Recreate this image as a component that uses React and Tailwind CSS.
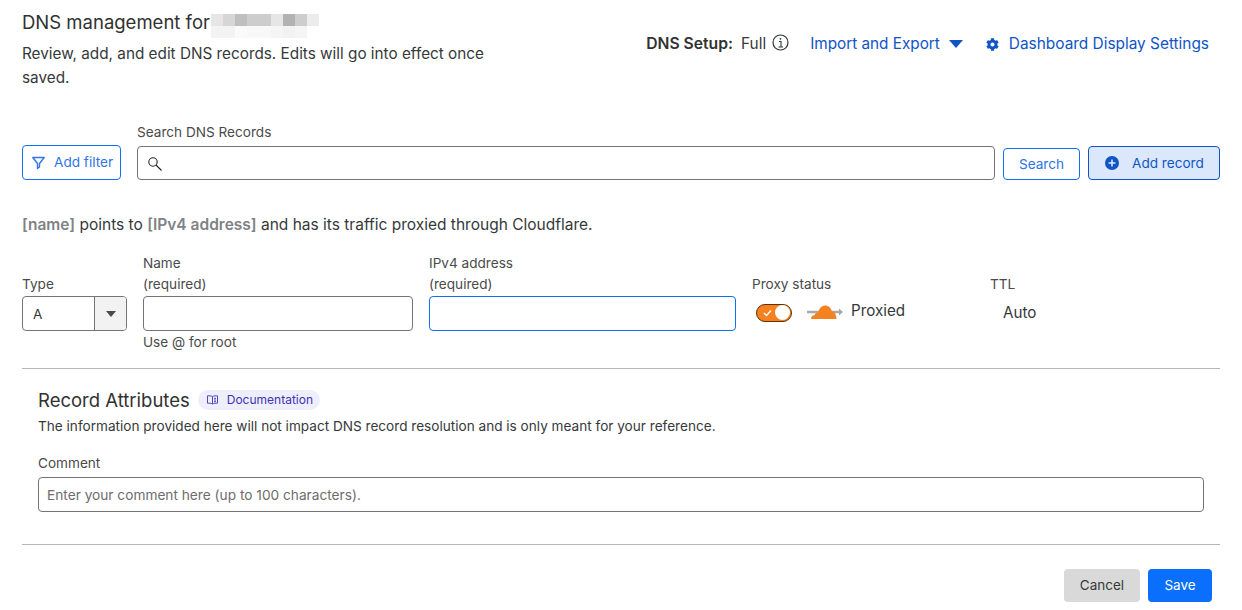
import { FaCog } from "react-icons/fa";

const blurTop = ["#e6e6e6", "#d6d6d6", "#bfbfbf", "#cdcdcd", "#cdcdcd", "#e6e6e6", "#b2b2b2", "#cdcdcd", "#ececec"];
const blurBottom = ["#f3f3f3", "#f3f3f3", "#fafafa", "#f8f8f8", "#f8f8f8", "#f5f5f5", "#f2f2f2", "#f5f5f5", "#ffffff"];

function RedactedName() {
  return (
    <div className="ml-[1px] mt-[8px] grid h-[24px] w-[108px] grid-cols-9">
      {blurTop.concat(blurBottom).map((color, index) => (
        <span key={index} style={{ backgroundColor: color }} />
      ))}
    </div>
  );
}

function CloudIcon() {
  return (
    <svg width="36" height="20" viewBox="0 0 36 20">
      <path d="M0 9h33" stroke="#a8a8a8" strokeWidth="2.500" />
      <path d="M32 5.500l4 3.500-4 3.500z" fill="#a8a8a8" />
      <path
        d="M4 16c0-2.200 1.500-3.800 3.500-3.800.3-1.600 1.800-2.700 3.500-2.300C12 5.500 14.800 2.500 18 2.500c3.400 0 6 2.400 6.800 5.800 2.600.2 4.700 3.500 4.700 7.700z"
        fill="#f6821f"
      />
    </svg>
  );
}

function InfoIcon() {
  return (
    <svg className="mb-[3px] ml-[6px]" width="17" height="17" viewBox="0 0 17 17" fill="none" stroke="#36393a">
      <circle cx="8.500" cy="8.500" r="7.500" strokeWidth="1.200" />
      <path d="M7 7.500h2V13M6.500 13h4.500" strokeWidth="1.100" />
      <circle cx="8.500" cy="4.800" r="0.900" fill="#36393a" stroke="none" />
    </svg>
  );
}

function FunnelIcon() {
  return (
    <svg width="13" height="14" viewBox="0 0 13 14" fill="none" stroke="#2f74e8" strokeWidth="1.400">
      <path d="M0.800 1.500h11.400L7.500 7.500v3.500L5.500 12.500V7.500z" strokeLinejoin="round" />
    </svg>
  );
}

function SearchGlass() {
  return (
    <svg className="mt-[2px]" width="14" height="14" viewBox="0 0 14 14" fill="none" stroke="#222" strokeWidth="1.100">
      <circle cx="5" cy="5" r="4.200" />
      <path d="M8 8l5.500 5.500" />
    </svg>
  );
}

function PlusDot() {
  return (
    <svg width="14" height="14" viewBox="0 0 14 14">
      <circle cx="7" cy="7" r="7" fill="#0f54c6" />
      <path d="M7 3.500v7M3.500 7h7" stroke="#dbe8fb" strokeWidth="1.600" />
    </svg>
  );
}

function DocsIcon() {
  return (
    <svg width="11" height="10" viewBox="0 0 11 10" fill="none" stroke="#3d35b5" strokeWidth="0.900">
      <path d="M5.500 1.500C4.500.8 2 .8.500.8v7.400c1.500 0 4 0 5 .8 1-.8 3.500-.8 5-.8V.8c-1.500 0-4 0-5 .7zM5.500 1.500V9" />
      <path d="M7 3.300h2M7 5h2M7 6.700h2" />
    </svg>
  );
}

export default function App() {
  return (
    <div className="h-[610px] w-[1242px] overflow-hidden bg-white px-[22px] font-['Inter',sans-serif] text-[#36393a]">
      <div className="flex items-start justify-between pr-[11px] pt-[10px]">
        <div className="w-[480px]">
          <div className="flex h-[24px] items-center">
            <h1 className="text-[18.500px] leading-[24px] text-[#313131]">DNS management for</h1>
            <RedactedName />
          </div>
          <p className="mt-[8px] text-[15.300px] leading-[24px]">
            Review, add, and edit DNS records. Edits will go into effect once saved.
          </p>
        </div>
        <div className="mt-[23px] flex items-center text-[15.400px] leading-[22px]">
          <span className="text-[15.700px] font-semibold text-[#313131]">DNS Setup:</span>
          <span className="ml-[8px]">Full</span>
          <InfoIcon />
          <span className="ml-[21px] text-[15.300px] text-[#0f54c6]">Import and Export</span>
          <svg className="ml-[9px]" width="14" height="8" viewBox="0 0 14 8">
            <path d="M0 0h14L7 8z" fill="#0f54c6" />
          </svg>
          <FaCog className="ml-[23px] size-[13px] text-[#0f54c6]" />
          <span className="ml-[10px] text-[#0f54c6]">Dashboard Display Settings</span>
        </div>
      </div>

      <div className="mt-[32px] flex items-end">
        <button className="flex h-[35px] w-[99px] items-center rounded-[4px] border border-[#0f6ff5] pl-[9px] text-[13.600px] text-[#2f74e8]">
          <FunnelIcon />
          <span className="ml-[9px]">Add filter</span>
        </button>
        <div className="ml-[16px] flex-1">
          <label className="block text-[13.600px] leading-[20px] text-[#4a4a4a]">Search DNS Records</label>
          <div className="mt-[4px] flex h-[34px] items-center rounded-[4px] border border-[#747474] pl-[10px]">
            <SearchGlass />
          </div>
        </div>
        <button className="ml-[8px] h-[32px] w-[77px] rounded-[4px] border border-[#0f6ff5] text-[13.600px] text-[#2f74e8]">
          Search
        </button>
        <button className="ml-[8px] flex h-[34px] w-[132px] items-center rounded-[4px] border border-[#0f54c6] bg-[#dbe8fb] pl-[16px] text-[13.600px] text-[#0f54c6]">
          <PlusDot />
          <span className="ml-[13px]">Add record</span>
        </button>
      </div>

      <p className="mt-[33px] text-[15.500px] leading-[24px]">
        <span className="font-semibold text-[#808285]">[name]</span> points to{" "}
        <span className="font-semibold text-[#808285]">[IPv4 address]</span> and has its traffic proxied through Cloudflare.
      </p>

      <div className="mt-[16px] flex items-start text-[13.600px] leading-[21px] text-[#4a4a4a]">
        <div className="w-[105px] pt-[21px]">
          <label className="block">Type</label>
          <div className="mt-[1px] flex h-[35px] items-center overflow-hidden rounded-[4px] border border-[#747474]">
            <span className="flex-1 pl-[10px] pt-[1px] text-[#36393a]">A</span>
            <span className="flex h-full w-[32px] items-center justify-center border-l border-[#747474] bg-[#f2f2f2]">
              <svg width="10" height="6" viewBox="0 0 10 6">
                <path d="M0 0h10L5 6z" fill="#4a4a4a" />
              </svg>
            </span>
          </div>
        </div>
        <div className="ml-[16px] w-[270px]">
          <label className="block">
            Name
            <br />
            (required)
          </label>
          <div className="mt-[1px] h-[35px] rounded-[4px] border border-[#747474]" />
          <p className="mt-[1px]">Use @ for root</p>
        </div>
        <div className="ml-[16px] w-[307px]">
          <label className="block">
            IPv4 address
            <br />
            (required)
          </label>
          <div className="mt-[1px] h-[35px] rounded-[4px] border border-[#0f6ff5]" />
        </div>
        <div className="ml-[16px] w-[238px] pt-[21px]">
          <label className="block">Proxy status</label>
          <div className="mt-[5px] flex items-center pl-[4px]">
            <span className="flex h-[18px] w-[36px] items-center justify-between rounded-full border border-[#5e3208] bg-[#f6821f] pl-[6px] pr-[1px]">
              <svg width="9" height="8" viewBox="0 0 9 8" fill="none" stroke="white" strokeWidth="1.400">
                <path d="M1 4l2.500 2.500L8 1.500" />
              </svg>
              <span className="size-[15px] rounded-full bg-white" />
            </span>
            <span className="ml-[15px] flex">
              <CloudIcon />
            </span>
            <span className="mb-[4px] ml-[8px] text-[15.200px] text-[#36393a]">Proxied</span>
          </div>
        </div>
        <div className="pt-[21px]">
          <label className="block">TTL</label>
          <p className="ml-[13px] mt-[6px] text-[15.200px] leading-[24px] text-[#36393a]">Auto</p>
        </div>
      </div>

      <hr className="mt-[15px] border-t border-[#b5b5b5]" />

      <div className="px-[16px]">
        <div className="mt-[19px] flex items-center">
          <h2 className="text-[18.500px] leading-[24px] text-[#313131]">Record Attributes</h2>
          <span className="ml-[8px] flex h-[20px] items-center rounded-full bg-[#efeefc] pl-[9px] pr-[7px] text-[12px] text-[#3d35b5]">
            <DocsIcon />
            <span className="ml-[9px]">Documentation</span>
          </span>
        </div>
        <p className="mt-[4px] text-[13.600px] leading-[20px] text-[#36393a]">
          The information provided here will not impact DNS record resolution and is only meant for your reference.
        </p>
        <label className="mt-[17px] block text-[13.600px] leading-[20px] text-[#4a4a4a]">Comment</label>
        <div className="mt-[4px] flex h-[35px] items-center rounded-[4px] border border-[#747474] pl-[8px] pt-[1px] text-[13.700px] text-[#6d6d6d]">
          Enter your comment here (up to 100 characters).
        </div>
      </div>

      <hr className="mt-[32px] border-t border-[#b5b5b5]" />

      <div className="mt-[24px] flex justify-end gap-[8px] pr-[8px]">
        <button className="h-[33px] w-[76px] rounded-[4px] bg-[#d9d9d9] text-[13.500px] text-[#36393a]">Cancel</button>
        <button className="h-[33px] w-[64px] rounded-[4px] bg-[#0a6ffd] text-[13.500px] text-white">Save</button>
      </div>
    </div>
  );
}
